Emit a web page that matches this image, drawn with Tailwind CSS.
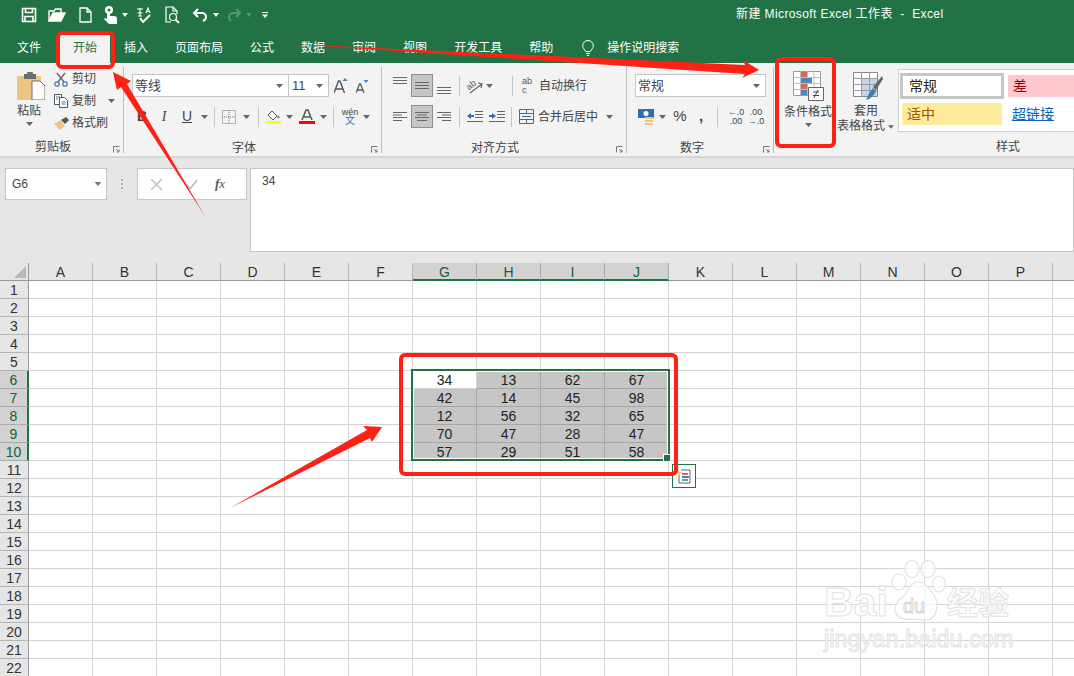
<!DOCTYPE html>
<html lang="zh-CN">
<head>
  <meta charset="UTF-8" />
  <title>新建 Microsoft Excel 工作表 - Excel</title>
  <script src="https://cdn.jsdelivr.net/npm/@tailwindcss/browser@4"></script>
</head>
<body class="relative w-[1074px] h-[676px] overflow-hidden bg-white text-[12px] text-[#444] font-['Liberation_Sans','Noto_Sans_CJK_SC',sans-serif]">

  <!-- title bar + tabs -->
  <header class="h-[63px] bg-[#217346] text-white">
    <div class="flex h-[33px] items-center">
      <div class="flex w-[736px] items-center pl-[21px] -mt-[3px]">
        <svg class="w-[16px] h-[16px]" viewBox="0 0 16 16" fill="none" stroke="#fff" stroke-width="1.6"><path d="M1.5 1.5h13v13h-13z"/><path d="M4.5 1.5v4h7v-4M4 14.5v-5h8v5"/></svg>
        <svg class="w-[18px] h-[16px] ml-[11px]" viewBox="0 0 18 16" fill="none" stroke="#fff" stroke-width="1.4"><path d="M1 14V4h5l1.500-2H13v3"/><path d="M1 14h12l4-8H5z" fill="#fff"/></svg>
        <svg class="w-[13px] h-[16px] ml-[13px]" viewBox="0 0 13 16" fill="none" stroke="#fff" stroke-width="1.3"><path d="M1 1h7l4 4v10H1zM8 1v4h4"/></svg>
        <svg class="w-[14px] h-[18px] ml-[11px]" viewBox="0 0 14 18" fill="#fff"><circle cx="6" cy="4" r="4"/><path d="M4 5h3v5h4c2 0 3 1 3 3v5H6l-5-5 1-1 2 1z"/><circle cx="6" cy="4" r="1.500" fill="#217346"/></svg>
        <svg class="w-[6px] h-[4px] ml-[5px]" viewBox="0 0 6 4" fill="#fff"><path d="M0 0h6L3 4z"/></svg>
        <svg class="w-[16px] h-[16px] ml-[8px]" viewBox="0 0 16 16" fill="none" stroke="#fff" stroke-width="1.100"><path d="M1 2h6M4 1v5M1.500 6h5M4 6v3M2 9h4"/><path d="M10 6l2-5 2 5M10.800 4.500h2.500" /><path d="M4 11l3 4 7-7" stroke-width="2"/></svg>
        <svg class="w-[15px] h-[18px] ml-[13px]" viewBox="0 0 15 18" fill="none" stroke="#fff" stroke-width="1.200"><path d="M6 16H1V1h7l4 4v3M8 1v4h4"/><circle cx="8" cy="11" r="3.500"/><path d="M10.500 13.500l3.500 3.500" stroke-width="2"/></svg>
        <svg class="w-[16px] h-[14px] ml-[12px]" viewBox="0 0 16 14" fill="none" stroke="#fff" stroke-width="2"><path d="M6 1L2 5l4 4M2 5h8a4 4 0 0 1 4 4c0 2-1 3-3 4"/></svg>
        <svg class="w-[6px] h-[4px] ml-[5px]" viewBox="0 0 6 4" fill="#fff"><path d="M0 0h6L3 4z"/></svg>
        <svg class="w-[14px] h-[14px] ml-[8px]" viewBox="0 0 14 14" fill="none" stroke="#5a9476" stroke-width="2"><path d="M9 1l4 4-4 4M13 5H6a4 4 0 0 0-4 4c0 2 1 3 2 4"/></svg>
        <svg class="w-[6px] h-[4px] ml-[5px]" viewBox="0 0 6 4" fill="#5a9476"><path d="M0 0h6L3 4z"/></svg>
        <svg class="w-[6px] h-[6px] ml-[10px]" viewBox="0 0 6 6" fill="#fff"><path d="M0 0h6v1H0zM0 2.500h6L3 6z"/></svg>
      </div>
      <div class="whitespace-pre text-[12px] tracking-[0.4px] -mt-[5px]">新建 Microsoft Excel 工作表  -  Excel</div>
    </div>
    <nav class="flex h-[30px] items-center pl-[17px] gap-[27px]">
      <span>文件</span>
      <span class="flex h-[30px] items-center -mx-[13px] ml-[-8px] pl-[13px] pr-[13px] bg-[#f3f3f3] text-[#217346]">开始</span>
      <span>插入</span>
      <span>页面布局</span>
      <span>公式</span>
      <span>数据</span>
      <span>审阅</span>
      <span>视图</span>
      <span>开发工具</span>
      <span>帮助</span>
      <svg class="w-[12px] h-[17px] ml-[2px]" viewBox="0 0 12 17" fill="none" stroke="#fff" stroke-width="1"><path d="M3.500 11.500C3 9.500.7 8.500.7 5.800a5.300 5.300 0 0 1 10.600 0c0 2.700-2.300 3.700-2.800 5.700zM4 13.500h4M4.800 15.500h2.400"/></svg>
      <span class="-ml-[14px]">操作说明搜索</span>
    </nav>
  </header>

  <!-- ribbon -->
  <div class="flex h-[95px] pt-[4px] bg-[#f3f3f3] border-b-2 border-[#d6d6d6] overflow-hidden">

    <!-- clipboard -->
    <section class="relative w-[124px] h-[86px] shrink-0 border-r border-[#bdbdbd]">
      <div class="flex h-[71px]">
        <div class="w-[54px] pl-[4px] flex flex-col items-center pt-[5px]">
          <svg class="w-[28px] h-[28px] ml-[4px]" viewBox="0 0 28 28"><path d="M0 4h24v24H0z" fill="#ecc67e"/><path d="M7 2h3a3 3 0 0 1 6 0h3v5H7z" fill="#6d6d6d"/><path d="M15 9h8l5 5v14H15z" fill="#fff" stroke="#6d6d6d"/></svg>
          <span class="mt-[3px] leading-[16px]">粘贴</span>
          <svg class="w-[7px] h-[4px] mt-[3px]" viewBox="0 0 7 4" fill="#666"><path d="M0 0h7L3.500 4z"/></svg>
        </div>
        <div class="flex flex-col pt-[1px]">
          <div class="flex h-[22px] items-center gap-[4px]">
            <svg class="w-[14px] h-[15px]" viewBox="0 0 14 15" fill="none" stroke="#4a7fb5" stroke-width="1.300"><circle cx="3" cy="12" r="2.200"/><circle cx="11" cy="12" r="2.200"/><path d="M4 10L11 1M10 10L3 1" stroke="#666"/></svg>
            <span>剪切</span>
          </div>
          <div class="flex h-[22px] items-center gap-[4px]">
            <svg class="w-[14px] h-[14px]" viewBox="0 0 14 14" fill="#fff" stroke="#555"><path d="M.5.500h7v10h-7z"/><path d="M5.500 3.500h5l3 3v7h-8z"/><path d="M2 3h4M2 5h2M7.500 8h4M7.500 10h4" stroke="#4a7fb5"/></svg>
            <span>复制</span>
            <svg class="w-[7px] h-[4px] ml-[8px]" viewBox="0 0 7 4" fill="#666"><path d="M0 0h7L3.500 4z"/></svg>
          </div>
          <div class="flex h-[22px] items-center gap-[4px]">
            <svg class="w-[15px] h-[13px]" viewBox="0 0 15 13"><path d="M0 7l6-4 5 6-5 4z" fill="#ecc67e"/><path d="M7 3l5-3 3 3-4 4z" fill="#555"/></svg>
            <span class="-ml-[1px]">格式刷</span>
          </div>
        </div>
      </div>
      <div class="w-[106px] text-center leading-[16px] mt-[1px]">剪贴板</div>
      <svg class="absolute right-[3px] bottom-[0px] w-[7px] h-[7px]" viewBox="0 0 7 7" fill="none" stroke="#777"><path d="M.5 6.500v-6h6M3 3l3 3M6 3.500V6H3.500"/></svg>
    </section>

    <!-- font -->
    <section class="relative w-[258px] h-[86px] shrink-0 border-r border-[#bdbdbd] pl-[8px] pt-[7px]">
      <div class="flex h-[23px] items-center">
        <div class="flex w-[157px] h-[23px] items-center justify-between bg-white border border-[#c6c6c6] pl-[2px] pr-[5px] text-[13px]">
          <span>等线</span>
          <svg class="w-[7px] h-[4px]" viewBox="0 0 7 4" fill="#666"><path d="M0 0h7L3.500 4z"/></svg>
        </div>
        <div class="flex w-[40px] h-[23px] items-center justify-between bg-white border border-l-0 border-[#c6c6c6] pl-[3px] pr-[5px] text-[13px]">
          <span>11</span>
          <svg class="w-[7px] h-[4px]" viewBox="0 0 7 4" fill="#666"><path d="M0 0h7L3.500 4z"/></svg>
        </div>
        <svg class="w-[14px] h-[15px] ml-[5px]" viewBox="0 0 14 15"><path d="M0 15L4.500 3h1.500L10.500 15M2 11h7" fill="none" stroke="#555" stroke-width="1.400"/><path d="M8.500 3l2.500-3 2.500 3z" fill="#4a7fb5"/></svg>
        <svg class="w-[13px] h-[13px] ml-[8px] mt-[1px]" viewBox="0 0 13 13"><path d="M0 13L3.500 4h1L8 13M1.500 10h5" fill="none" stroke="#555" stroke-width="1.300"/><path d="M7.500 0h5L10 3z" fill="#4a7fb5"/></svg>
      </div>
      <div class="flex h-[23px] items-center mt-[8px]">
        <span class="flex w-[20px] justify-center font-bold text-[14px]">B</span>
        <span class="flex w-[24px] justify-center italic text-[14px] font-['Liberation_Serif',serif]">I</span>
        <span class="flex w-[22px] justify-center underline text-[14px]">U</span>
        <span class="flex w-[12px] justify-center"><svg class="w-[7px] h-[4px]" viewBox="0 0 7 4" fill="#666"><path d="M0 0h7L3.500 4z"/></svg></span>
        <span class="flex w-[9px] justify-center"><span class="w-[1px] h-[20px] bg-[#c6c6c6]"></span></span>
        <span class="flex w-[20px] justify-center"><svg class="w-[14px] h-[14px]" viewBox="0 0 14 14" fill="none" stroke="#777" stroke-dasharray="1 1"><path d="M.5.500h13v13H.5zM7 0v14M0 7h14"/></svg></span>
        <span class="flex w-[14px] justify-center"><svg class="w-[7px] h-[4px]" viewBox="0 0 7 4" fill="#666"><path d="M0 0h7L3.500 4z"/></svg></span>
        <span class="flex w-[10px] justify-center"><span class="w-[1px] h-[20px] bg-[#c6c6c6]"></span></span>
        <span class="flex w-[20px] justify-center"><svg class="w-[16px] h-[15px]" viewBox="0 0 16 15"><path d="M3 6l4-4 5 5-4 4z" fill="#fff" stroke="#555"/><path d="M13 6l2 3h-3z" fill="#4a7fb5"/><path d="M0 12h16v3H0z" fill="#ffff00"/></svg></span>
        <span class="flex w-[12px] justify-center"><svg class="w-[7px] h-[4px]" viewBox="0 0 7 4" fill="#666"><path d="M0 0h7L3.500 4z"/></svg></span>
        <span class="flex w-[24px] justify-center"><svg class="w-[16px] h-[15px]" viewBox="0 0 16 15"><path d="M3 11L7 1h2l4 10M5 8h6" fill="none" stroke="#555" stroke-width="1.500"/><path d="M0 12h16v3H0z" fill="#ff0000"/></svg></span>
        <span class="flex w-[8px] justify-center"><svg class="w-[7px] h-[4px]" viewBox="0 0 7 4" fill="#666"><path d="M0 0h7L3.500 4z"/></svg></span>
        <span class="flex w-[12px] justify-center"><span class="w-[1px] h-[20px] bg-[#c6c6c6]"></span></span>
        <span class="flex flex-col w-[22px] items-center leading-[8px] text-[9px]"><span>wén</span><span class="text-[#2f6fb0] text-[10px] leading-[10px]">文</span></span>
        <span class="flex w-[10px] justify-center"><svg class="w-[7px] h-[4px]" viewBox="0 0 7 4" fill="#666"><path d="M0 0h7L3.500 4z"/></svg></span>
      </div>
      <div class="w-[224px] text-center leading-[16px] mt-[12px]">字体</div>
      <svg class="absolute right-[3px] bottom-[0px] w-[7px] h-[7px]" viewBox="0 0 7 7" fill="none" stroke="#777"><path d="M.5 6.500v-6h6M3 3l3 3M6 3.500V6H3.500"/></svg>
    </section>

    <!-- alignment -->
    <section class="relative w-[245px] h-[86px] shrink-0 border-r border-[#bdbdbd] pl-[7px] pt-[7px]">
      <div class="flex h-[23px] items-center">
        <span class="flex w-[22px] h-[23px] justify-center pt-[3px]"><svg class="w-[14px] h-[7px]" viewBox="0 0 14 7" stroke="#666"><path d="M0 .5h14M0 3.500h14M0 6.500h14"/></svg></span>
        <span class="flex w-[22px] h-[23px] items-center justify-center bg-[#c6c6c6] border border-[#8f8f8f]"><svg class="w-[14px] h-[7px]" viewBox="0 0 14 7" stroke="#666"><path d="M0 .5h14M0 3.500h14M0 6.500h14"/></svg></span>
        <span class="flex w-[22px] h-[23px] justify-center items-end pb-[3px]"><svg class="w-[14px] h-[7px]" viewBox="0 0 14 7" stroke="#666"><path d="M0 .5h14M0 3.500h14M0 6.500h14"/></svg></span>
        <span class="flex w-[8px] justify-center"><span class="w-[1px] h-[20px] bg-[#c6c6c6]"></span></span>
        <span class="flex w-[21px] justify-center"><svg class="w-[20px] h-[17px] overflow-visible" viewBox="0 0 20 17" fill="none" stroke="#666"><text x="2" y="11" transform="rotate(-40 7 8)" font-size="9" fill="#555" stroke="none">ab</text><path d="M6 16l12-9M14 6l4 1-1 4" stroke-width="1.200"/></svg></span>
        <span class="flex w-[10px] justify-center"><svg class="w-[7px] h-[4px]" viewBox="0 0 7 4" fill="#666"><path d="M0 0h7L3.500 4z"/></svg></span>
        <span class="flex w-[8px] ml-[14px] justify-center"><span class="w-[1px] h-[20px] bg-[#c6c6c6]"></span></span>
        <span class="flex w-[13px] flex-col ml-[6px] text-[9px] leading-[9px] text-[#555]"><span>ab</span><span>c</span></span>
        <span class="ml-[4px]">自动换行</span>
      </div>
      <div class="flex h-[23px] items-center mt-[8px]">
        <span class="flex w-[22px] justify-center"><svg class="w-[14px] h-[9px]" viewBox="0 0 14 9" stroke="#666"><path d="M0 .5h14M0 3h9M0 5.500h14M0 8.500h9"/></svg></span>
        <span class="flex w-[22px] h-[23px] items-center justify-center bg-[#c6c6c6] border border-[#8f8f8f]"><svg class="w-[14px] h-[9px]" viewBox="0 0 14 9" stroke="#666"><path d="M0 .5h14M2 3h10M0 5.500h14M2 8.500h10"/></svg></span>
        <span class="flex w-[22px] justify-center"><svg class="w-[14px] h-[9px]" viewBox="0 0 14 9" stroke="#666"><path d="M0 .5h14M5 3h9M0 5.500h14M5 8.500h9"/></svg></span>
        <span class="flex w-[8px] justify-center"><span class="w-[1px] h-[20px] bg-[#c6c6c6]"></span></span>
        <span class="flex w-[23px] justify-center"><svg class="w-[16px] h-[11px]" viewBox="0 0 16 11"><path d="M8 .5h8M8 3.500h8M8 6.500h8M0 10.500h16" stroke="#666"/><path d="M0 5l4-3v2h3v2H4v2z" fill="#2f6fb0"/></svg></span>
        <span class="flex w-[21px] justify-center"><svg class="w-[16px] h-[11px]" viewBox="0 0 16 11"><path d="M8 .5h8M8 3.500h8M8 6.500h8M0 10.500h16" stroke="#666"/><path d="M7 5L3 2v2H0v2h3v2z" fill="#2f6fb0"/></svg></span>
        <span class="flex w-[8px] justify-center"><span class="w-[1px] h-[20px] bg-[#c6c6c6]"></span></span>
        <svg class="w-[15px] h-[15px] ml-[4px]" viewBox="0 0 15 15" fill="none" stroke="#666"><path d="M.5.500h14v14H.5zM0 4.500h15M0 10.500h15M7.500 0v4M7.500 11v4"/><path d="M3 7.500h9" stroke="#2f6fb0"/></svg>
        <span class="ml-[4px]">合并后居中</span>
        <svg class="w-[7px] h-[4px] ml-[8px]" viewBox="0 0 7 4" fill="#666"><path d="M0 0h7L3.500 4z"/></svg>
      </div>
      <div class="w-[212px] text-center leading-[16px] mt-[12px]">对齐方式</div>
      <svg class="absolute right-[3px] bottom-[0px] w-[7px] h-[7px]" viewBox="0 0 7 7" fill="none" stroke="#777"><path d="M.5 6.500v-6h6M3 3l3 3M6 3.500V6H3.500"/></svg>
    </section>

    <!-- number -->
    <section class="relative w-[147px] h-[86px] shrink-0 border-r border-[#bdbdbd] pl-[8px] pt-[7px]">
      <div class="flex w-[131px] h-[23px] items-center justify-between bg-white border border-[#c6c6c6] pl-[2px] pr-[5px] text-[13px]">
        <span>常规</span>
        <svg class="w-[7px] h-[4px]" viewBox="0 0 7 4" fill="#666"><path d="M0 0h7L3.500 4z"/></svg>
      </div>
      <div class="flex h-[23px] items-center mt-[8px] ml-[2px]">
        <span class="flex w-[18px] justify-center"><svg class="w-[16px] h-[16px]" viewBox="0 0 16 16"><path d="M0 0h16v9H0z" fill="#2f6fb0"/><circle cx="8" cy="4.500" r="2.500" fill="#fff"/><path d="M7 8h8v2H7zM7 11h8v2H7zM7 14h8v2H7z" fill="#ecc67e"/></svg></span>
        <span class="flex w-[14px] justify-center"><svg class="w-[7px] h-[4px]" viewBox="0 0 7 4" fill="#666"><path d="M0 0h7L3.500 4z"/></svg></span>
        <span class="flex w-[22px] justify-center text-[15px]">%</span>
        <span class="flex w-[20px] justify-center font-bold text-[15px]">,</span>
        <span class="flex w-[12px] justify-center"><span class="w-[1px] h-[20px] bg-[#c6c6c6]"></span></span>
        <span class="flex flex-col w-[26px] items-center text-[9px] leading-[9px]"><span><b class="text-[#2f6fb0] font-normal">←</b>.0</span><span>.00</span></span>
        <span class="flex flex-col w-[14px] items-center text-[9px] leading-[9px]"><span>.00</span><span><b class="text-[#2f6fb0] font-normal">→</b>.0</span></span>
      </div>
      <div class="w-[114px] text-center leading-[16px] mt-[12px]">数字</div>
      <svg class="absolute right-[3px] bottom-[0px] w-[7px] h-[7px]" viewBox="0 0 7 7" fill="none" stroke="#777"><path d="M.5 6.500v-6h6M3 3l3 3M6 3.500V6H3.500"/></svg>
    </section>

    <!-- styles -->
    <section class="relative w-[300px] h-[86px] shrink-0">
      <div class="flex h-[71px]">
        <div class="w-[63px] shrink-0 pl-[5px] flex flex-col items-center pt-[4px]">
          <svg class="w-[31px] h-[30px]" viewBox="0 0 31 30"><path d="M.5.500h27v24H.5z" fill="#fff" stroke="#9a9a9a"/><path d="M.5 6.500h27M.5 12.500h27M.5 18.500h27M7.500 0v24M14.500 0v24M21 0v24" stroke="#bdbdbd"/><path d="M8 1h6v5H8zM8 13h6v5H8z" fill="#d6694a"/><path d="M8 7h11v5H8zM8 19h6v5H8z" fill="#4a86c5"/><path d="M15.500 16.500h15v13h-15z" fill="#fff" stroke="#666"/><path d="M20 21h6M20 24.500h6M25 19l-4 8" stroke="#444" fill="none"/></svg>
          <span class="mt-[3px] leading-[16px]">条件格式</span>
          <svg class="w-[7px] h-[4px] mt-[3px]" viewBox="0 0 7 4" fill="#666"><path d="M0 0h7L3.500 4z"/></svg>
        </div>
        <div class="w-[61px] shrink-0 flex flex-col pt-[5px]">
          <svg class="w-[30px] h-[29px] ml-[16px]" viewBox="0 0 30 29"><path d="M.5.500h24v24H.5z" fill="#fff" stroke="#888"/><path d="M9 6h15v18H9z" fill="#c7d5e8"/><path d="M.5 6.500h24M.5 12.500h24M.5 18.500h24M8.500 0v24M16.500 0v24" stroke="#9a9a9a"/><path d="M29 4L20 15l3 3 7-11z" fill="#666"/><path d="M20 16l3 3c-2 5-6 8-10 9 2-4 3-8 7-12z" fill="#3f7fc1"/></svg>
          <span class="mt-[3px] leading-[15px] pl-[17px]">套用</span>
          <span class="flex items-center leading-[15px] whitespace-nowrap">表格格式<svg class="w-[6px] h-[4px] ml-[3px] shrink-0" viewBox="0 0 7 4" fill="#666"><path d="M0 0h7L3.500 4z"/></svg></span>
        </div>
        <div class="flex-1 min-w-0 mt-[2px] h-[63px] bg-white border border-r-0 border-[#d0d0d0] pl-[1px] pt-[3px] text-[14px] overflow-hidden">
          <div class="flex items-center">
            <span class="flex w-[104px] shrink-0 h-[26px] items-center px-[6px] border-[3px] border-[#c6c6c6] text-[#222]">常规</span>
            <span class="flex w-[70px] shrink-0 h-[22px] items-center ml-[4px] px-[5px] bg-[#ffc7ce] text-[#9c0006]">差</span>
          </div>
          <div class="flex items-center mt-[4px]">
            <span class="flex w-[100px] shrink-0 h-[22px] items-center ml-[2px] px-[5px] bg-[#ffeb9c] text-[#9c5700]">适中</span>
            <span class="ml-[10px] text-[#0563c1] underline">超链接</span>
          </div>
        </div>
      </div>
      <div class="pl-[222px] leading-[16px] mt-[1px]">样式</div>
    </section>
  </div>

  <!-- formula bar -->
  <div class="flex h-[105px] bg-[#e6e6e6] pt-[10px] pl-[5px]">
    <div class="flex w-[102px] h-[32px] items-center justify-between bg-white border border-[#c6c6c6] pl-[6px] pr-[4px]">
      <span>G6</span>
      <svg class="w-[8px] h-[4px]" viewBox="0 0 7 4" fill="#777"><path d="M0 0h7L3.500 4z"/></svg>
    </div>
    <div class="flex w-[30px] h-[32px] flex-col items-center justify-center gap-[2px]">
      <span class="w-[2px] h-[2px] bg-[#b0b0b0]"></span><span class="w-[2px] h-[2px] bg-[#b0b0b0]"></span><span class="w-[2px] h-[2px] bg-[#b0b0b0]"></span>
    </div>
    <div class="flex w-[110px] h-[32px] items-center bg-white border border-[#c6c6c6]">
      <svg class="w-[11px] h-[11px] ml-[13px]" viewBox="0 0 11 11" stroke="#c0c0c0" stroke-width="1.500"><path d="M0 0l11 11M11 0L0 11"/></svg>
      <svg class="w-[13px] h-[11px] ml-[23px]" viewBox="0 0 13 11" fill="none" stroke="#c0c0c0" stroke-width="1.800"><path d="M1 5l4 5 7-9"/></svg>
      <span class="ml-[17px] italic text-[13px] font-['Liberation_Serif',serif] text-[#555]"><b>f</b>x</span>
    </div>
    <div class="w-[824px] h-[84px] ml-[3px] bg-white border border-[#c6c6c6] pl-[11px] pt-[4px] leading-[16px]">34</div>
  </div>

  <!-- sheet grid, cells are filled in below -->
  <div id="sheet" class="grid grid-cols-[29px_repeat(17,64px)] auto-rows-[18px] text-[14px] text-[#222]"></div>

  <!-- selection border and quick analysis -->
  <div class="absolute left-[411px] top-[369px] w-[259px] h-[92px] border-2 border-[#217346] pointer-events-none">
    <div class="w-full h-full border border-white"></div>
    <span class="absolute -right-[3px] -bottom-[3px] w-[6px] h-[6px] bg-[#217346] border border-white box-content"></span>
  </div>
  <div class="absolute left-[672px] top-[464px] flex w-[24px] h-[24px] items-center justify-center bg-white border border-[#217346]">
    <svg class="w-[16px] h-[16px]" viewBox="0 0 16 16"><path d="M5 2h9v13H3V7" fill="#fff" stroke="#666"/><path d="M3 0L0 6h3L2 9l4-5H3z" fill="#ecc67e"/><path d="M6 5h6v2H6z" fill="#d6694a"/><path d="M6 8h7v2H6z" fill="#3f7fc1"/><path d="M6 11h6v2H6z" fill="#5aa58a"/></svg>
  </div>

  <!-- watermark -->
  <div class="absolute left-[824px] top-[560px] w-[195px] h-[92px] pointer-events-none">
    <svg class="absolute left-[66px] top-[0px] w-[60px] h-[64px]" viewBox="0 0 60 64" fill="#fff" fill-opacity=".75" stroke="#e2e2e2" stroke-width="1.200"><ellipse cx="9" cy="22" rx="7" ry="8"/><ellipse cx="22" cy="9" rx="7" ry="8.500"/><ellipse cx="38" cy="9" rx="7" ry="8.500"/><ellipse cx="49" cy="24" rx="6.500" ry="8"/><path d="M28 22c8 0 13 9 17 15 4 8 2 23-9 23-5 0-9-1-13-1-6 0-17 2-18-10 0-8 7-10 11-16 3-5 6-11 12-11z"/></svg>
    <span class="absolute left-[0px] top-[22px] text-[41px] leading-[40px] font-bold text-white/70 [-webkit-text-stroke:1px_#e2e2e2]">Bai</span>
    <span class="absolute left-[79px] top-[36px] text-[20px] leading-[20px] text-white/70 [-webkit-text-stroke:1px_#d6d6d6]">du</span>
    <span class="absolute left-[123px] top-[27px] text-[31px] leading-[34px] font-bold text-white/70 [-webkit-text-stroke:1px_#e2e2e2]">经验</span>
    <span class="absolute left-[0px] top-[66px] text-[23.500px] leading-[26px] text-white/70 [-webkit-text-stroke:1px_#e2e2e2] whitespace-nowrap">jingyan.baidu.com</span>
  </div>

  <!-- red annotations -->
  <svg class="absolute left-0 top-0 w-[1074px] h-[676px] pointer-events-none" viewBox="0 0 1074 676">
    <g fill="none" stroke="#ff2116" stroke-width="4">
      <rect x="58" y="33" width="55" height="34" rx="4"/>
      <rect x="777" y="59" width="57" height="87" rx="4"/>
      <rect x="401" y="355" width="275" height="119" rx="4"/>
    </g>
    <g fill="#ff2116">
      <path d="M205 216L127 84 131 81 113 72 117 90 121 87z"/>
      <path d="M290 44L745 65 743 60 759 70 742 78 745 74z"/>
      <path d="M230 508L367 430 363 426 382 427 372 442 370 438z"/>
    </g>
  </svg>

  <script>
    const cols = "ABCDEFGHIJKLMNOPQ".split("");
    const data = {
      6: [34, 13, 62, 67],
      7: [42, 14, 45, 98],
      8: [12, 56, 32, 65],
      9: [70, 47, 28, 47],
      10: [57, 29, 51, 58],
    };
    let html = '<div class="bg-[#e6e6e6] border-r border-b border-[#9a9a9a] relative overflow-hidden"><span class="absolute right-[2px] bottom-[2px] w-0 h-0 border-l-[12px] border-t-[12px] border-l-transparent border-t-transparent border-r-[0px] border-b-[12px] border-b-[#b8b8b8]"></span></div>';
    cols.forEach((c, i) => {
      const sel = i >= 6 && i <= 9;
      html += sel
        ? '<div class="flex items-center justify-center pt-[2px] bg-[#d2d2d2] border-r border-[#ababab] border-b-2 border-b-[#217346] text-[#17603a]">' + c + '</div>'
        : '<div class="flex items-center justify-center pt-[2px] bg-[#e6e6e6] border-r border-[#b5b5b5] border-b border-b-[#9a9a9a] text-[#333]">' + (c === "Q" ? "" : c) + '</div>';
    });
    for (let r = 1; r <= 22; r++) {
      const selRow = r >= 6 && r <= 10;
      html += selRow
        ? '<div class="flex items-center justify-center pt-[2px] bg-[#d2d2d2] border-b border-[#ababab] border-r-2 border-r-[#217346] text-[#17603a]">' + r + '</div>'
        : '<div class="flex items-center justify-center pt-[2px] bg-[#e6e6e6] border-b border-[#b5b5b5] border-r border-r-[#9a9a9a] text-[#333]">' + r + '</div>';
      cols.forEach((c, i) => {
        const inData = selRow && i >= 6 && i <= 9;
        if (!inData) {
          html += '<div class="border-r border-b border-[#d4d4d4]"></div>';
        } else if (r === 6 && i === 6) {
          html += '<div class="flex items-center justify-center pt-[2px] bg-white border-r border-b border-[#d4d4d4]">' + data[r][0] + '</div>';
        } else {
          html += '<div class="flex items-center justify-center pt-[2px] bg-[#c6c6c6] border-r border-b border-[#a6a6a6]">' + data[r][i - 6] + '</div>';
        }
      });
    }
    document.getElementById("sheet").innerHTML = html;
  </script>
</body>
</html>
